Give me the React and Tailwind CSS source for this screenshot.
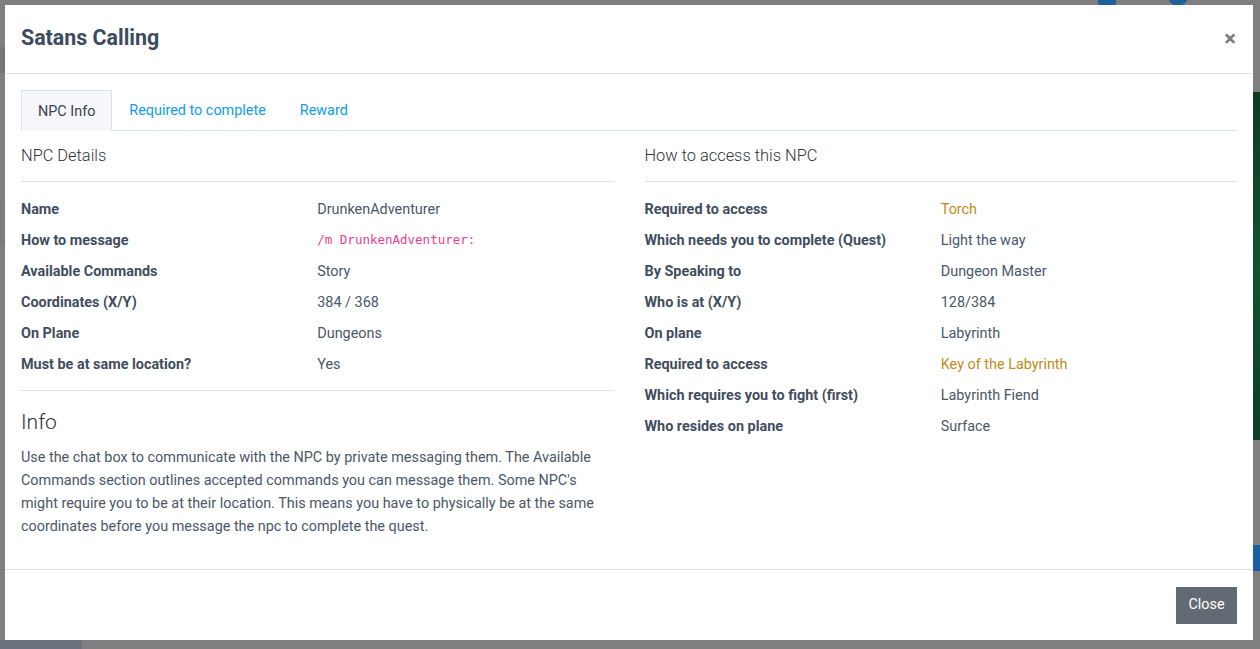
const NPC_DETAILS = [
  { label: "Name", value: "DrunkenAdventurer" },
  { label: "How to message", value: "/m DrunkenAdventurer:", code: true },
  { label: "Available Commands", value: "Story" },
  { label: "Coordinates (X/Y)", value: "384 / 368" },
  { label: "On Plane", value: "Dungeons" },
  { label: "Must be at same location?", value: "Yes" },
];

const ACCESS = [
  { label: "Required to access", value: "Torch", item: true },
  { label: "Which needs you to complete (Quest)", value: "Light the way" },
  { label: "By Speaking to", value: "Dungeon Master" },
  { label: "Who is at (X/Y)", value: "128/384" },
  { label: "On plane", value: "Labyrinth" },
  { label: "Required to access", value: "Key of the Labyrinth", item: true },
  { label: "Which requires you to fight (first)", value: "Labyrinth Fiend" },
  { label: "Who resides on plane", value: "Surface" },
];

const TABS = ["NPC Info", "Required to complete", "Reward"];

function DetailRow({ row }) {
  let valueClass = "text-[#4a5768]";
  if (row.code) valueClass = "text-[#e83e8c] font-['DejaVu_Sans_Mono',monospace] text-[12.5px]";
  if (row.item) valueClass = "text-[#c18b1c]";

  return (
    <div className="grid h-[31px] grid-cols-2 items-center text-[14.4px]">
      <span className="font-bold text-[#3f4d5e]">{row.label}</span>
      <span className={valueClass}>{row.value}</span>
    </div>
  );
}

function Backdrop() {
  return (
    <>
      <div className="absolute left-0 top-[47px] h-[26px] w-[5px] bg-[#767676]" />
      <div className="absolute left-0 top-[200px] h-[45px] w-[5px] bg-[#7b7b7b]" />
      <div className="absolute left-[1098px] top-0 h-[6px] w-[18px] rounded-b-sm bg-[#1d5f9a]" />
      <div className="absolute left-[1168px] top-[-14px] h-[20px] w-[20px] rounded-full bg-[#1d5f9a]" />
      <div className="absolute right-0 top-[92px] h-[348px] w-[7px] bg-gradient-to-b from-[#0f3a22] via-[#0f5330] to-[#0e3d24]" />
      <div className="absolute right-0 top-[545px] h-[26px] w-[7px] bg-[#185f9f]" />
      <div className="absolute bottom-0 left-0 h-[9px] w-[82px] bg-[#6a7280]" />
    </>
  );
}

export default function App() {
  return (
    <div className="relative h-[649px] w-[1260px] overflow-hidden bg-[#7f7f7f] pl-[5px] pt-[5px] font-['Roboto',sans-serif]">
      <Backdrop />

      <div className="relative flex h-[635px] w-[1248px] flex-col bg-white">
        <div className="flex h-[69px] items-center justify-between border-b border-[#dee2e6] px-4 pb-[1px]">
          <h5 className="text-[21.4px] font-bold text-[#3d4b5e]">Satans Calling</h5>
          <button type="button" className="mr-[1px] mt-[1px] text-[22px] font-bold leading-none text-[#7a7a7a]">
            ×
          </button>
        </div>

        <div className="flex-1 px-4 pt-[16px]">
          <div className="flex h-[41px] items-end border-b border-[#dce3ea] text-[14.4px]">
            {TABS.map((tab, i) => (
              <div
                key={tab}
                className={
                  i === 0
                    ? "-mb-px flex h-[41px] items-center border border-b-0 border-[#dce3ea] bg-[#f5f7fa] px-[16px] pt-[2px] text-[#3d4350]"
                    : "flex h-[40px] items-center px-[17px] pt-[2px] text-[#0f9bf2]"
                }
              >
                {tab}
              </div>
            ))}
          </div>

          <div className="grid grid-cols-2 gap-x-[31px]">
            <div>
              <h6 className="flex h-[51px] items-center border-b border-[#dcdfe3] text-[16.4px] font-light text-[#2e3338]">
                NPC Details
              </h6>
              <div className="pt-[12px]">
                {NPC_DETAILS.map((row) => (
                  <DetailRow key={row.label} row={row} />
                ))}
              </div>
              <div className="mt-[10px] border-t border-[#dcdfe3]" />
              <h4 className="mt-[18px] text-[21px] font-light leading-[26px] text-[#2e3338]">Info</h4>
              <p className="mt-[11px] text-[14.4px] leading-[23px] text-[#4a5768]">
                Use the chat box to communicate with the NPC by private messaging them. The Available
                Commands section outlines accepted commands you can message them. Some NPC's might
                require you to be at their location. This means you have to physically be at the same
                coordinates before you message the npc to complete the quest.
              </p>
            </div>

            <div>
              <h6 className="flex h-[51px] items-center border-b border-[#dcdfe3] text-[16.4px] font-light text-[#2e3338]">
                How to access this NPC
              </h6>
              <div className="pt-[12px]">
                {ACCESS.map((row, i) => (
                  <DetailRow key={i} row={row} />
                ))}
              </div>
            </div>
          </div>
        </div>

        <div className="flex h-[71px] items-center justify-end border-t border-[#dcdfe3] px-4">
          <button type="button" className="h-[37px] w-[61px] bg-[#626b73] text-[14.4px] text-white">
            Close
          </button>
        </div>
      </div>
    </div>
  );
}
